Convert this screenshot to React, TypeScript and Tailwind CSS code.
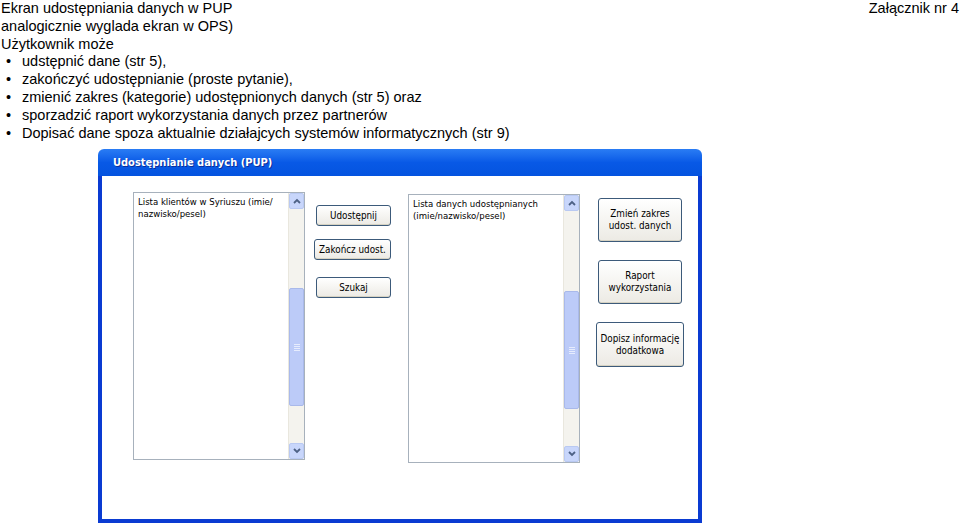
import React from "react";

const tahoma = "font-['Tahoma','DejaVu_Sans_Condensed','DejaVu_Sans',sans-serif]";

function ScrollBar({ thumbTop, thumbHeight }: { thumbTop: number; thumbHeight: number }) {
  return (
    <div className="flex w-[16px] shrink-0 flex-col bg-[#f4f3ee] border-l border-[#e9e7de]">
      <div className="flex h-[16px] items-center justify-center rounded-[2px] border border-[#b9c9f2] bg-[#c8d6fb]">
        <svg width="8" height="6" viewBox="0 0 8 6">
          <path d="M1 5 L4 2 L7 5" fill="none" stroke="#4d6185" strokeWidth="1.8" />
        </svg>
      </div>
      <div className="flex-1 flex flex-col">
        <div style={{ height: thumbTop }} />
        <div
          className="flex items-center justify-center rounded-[2px] border border-[#a9b9ea] bg-[#bccbf8]"
          style={{ height: thumbHeight }}
        >
          <div className="flex flex-col gap-[1px]">
            <div className="h-px w-[6px] bg-[#e6ecfd]" />
            <div className="h-px w-[6px] bg-[#e6ecfd]" />
            <div className="h-px w-[6px] bg-[#e6ecfd]" />
            <div className="h-px w-[6px] bg-[#e6ecfd]" />
          </div>
        </div>
      </div>
      <div className="flex h-[16px] items-center justify-center rounded-[2px] border border-[#b9c9f2] bg-[#c8d6fb]">
        <svg width="8" height="6" viewBox="0 0 8 6">
          <path d="M1 1 L4 4 L7 1" fill="none" stroke="#4d6185" strokeWidth="1.8" />
        </svg>
      </div>
    </div>
  );
}

function ListBox({ text, height, thumbTop }: { text: React.ReactNode; height: number; thumbTop: number }) {
  return (
    <div
      className="flex w-[172px] shrink-0 border border-[#a7b1bc] bg-white"
      style={{ height }}
    >
      <div className={`flex-1 whitespace-nowrap px-[4px] pt-[3px] text-[9.5px] leading-[12px] text-black ${tahoma}`}>{text}</div>
      <ScrollBar thumbTop={thumbTop} thumbHeight={118} />
    </div>
  );
}

function XpButton({ children, className }: { children: React.ReactNode; className: string }) {
  return (
    <button
      type="button"
      className={`flex items-center justify-center whitespace-nowrap rounded-[3px] border border-[#3c5a7a] bg-gradient-to-b from-white to-[#eceae4] text-center text-[9.8px] leading-[12px] text-black shadow-[inset_0_-1px_0_#d6d2c2] ${tahoma} ${className}`}
    >
      {children}
    </button>
  );
}

export default function App() {
  const bullets = [
    "udstępnić dane (str 5),",
    "zakończyć udostępnianie (proste pytanie),",
    "zmienić zakres (kategorie) udostępnionych danych (str 5) oraz",
    "sporzadzić raport wykorzystania danych przez partnerów",
    "Dopisać dane spoza aktualnie działajcych systemów informatycznych (str 9)",
  ];

  return (
    <div className="relative h-[524px] w-[960px] overflow-hidden bg-white font-['Liberation_Sans',Arial,sans-serif] text-[14.5px] leading-[17.8px] text-black">
      <div className="absolute right-[1px] top-0">Załącznik nr 4</div>
      <div className="pl-[1px]">
        <div>Ekran udostępniania danych w PUP</div>
        <div>analogicznie wyglada ekran w OPS)</div>
        <div>Użytkownik może</div>
        <ul>
          {bullets.map((b) => (
            <li key={b} className="flex">
              <span className="w-[21px] pl-[5px]">•</span>
              <span>{b}</span>
            </li>
          ))}
        </ul>
      </div>

      <div className="ml-[98px] mt-[7px] flex h-[374px] w-[604px] flex-col">
        <div className="flex h-[27px] items-center rounded-t-[6px] bg-gradient-to-b from-[#2a7cf4] via-[#0859e6] to-[#0453df] pl-[15px]">
          <span className={`text-[11px] font-bold text-white [text-shadow:1px_1px_0_#0a2f9a] ${tahoma}`}>
            Udostępnianie danych (PUP)
          </span>
        </div>
        <div className="flex flex-1 border-x-[4px] border-b-[4px] border-[#0a3bd2] bg-white">
          <div className="flex items-start pl-[31px] pt-[16px]">
            <ListBox
              height={268}
              thumbTop={79}
              text={
                <>
                  Lista klientów w Syriuszu (imie/
                  <br />
                  nazwisko/pesel)
                </>
              }
            />
            <div className="ml-[9px] flex w-[77px] flex-col items-end pt-[13px]">
              <XpButton className="h-[21px] w-[75px]">Udostępnij</XpButton>
              <XpButton className="mt-[13px] h-[21px] w-[77px]">Zakończ udost.</XpButton>
              <XpButton className="mt-[17px] h-[21px] w-[75px]">Szukaj</XpButton>
            </div>
            <div className="ml-[17px] pt-[2px]">
              <ListBox
                height={269}
                thumbTop={80}
                text={
                  <>
                    Lista danych udostępnianych
                    <br />
                    (imie/nazwisko/pesel)
                  </>
                }
              />
            </div>
            <div className="ml-[16px] flex w-[88px] flex-col items-center pt-[6px]">
              <XpButton className="h-[44px] w-[84px]">
                Zmień zakres
                <br />
                udost. danych
              </XpButton>
              <XpButton className="mt-[18px] h-[44px] w-[84px]">
                Raport
                <br />
                wykorzystania
              </XpButton>
              <XpButton className="mt-[18px] h-[45px] w-[88px]">
                Dopisz informację
                <br />
                dodatkowa
              </XpButton>
            </div>
          </div>
        </div>
      </div>
    </div>
  );
}
